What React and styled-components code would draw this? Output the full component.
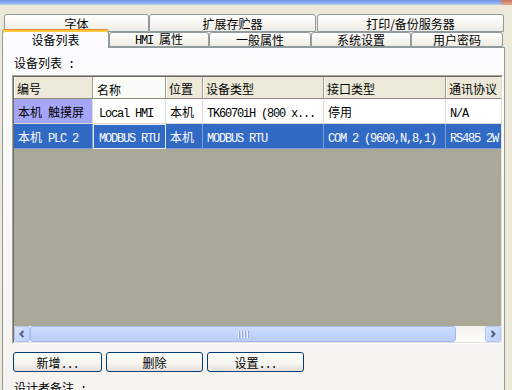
import styled, { createGlobalStyle } from "styled-components";

const GlobalStyle = createGlobalStyle`
  html, body {
    margin: 0;
    padding: 0;
    background: #ECE9D8;
  }
  body {
    font-family: "Noto Sans CJK SC", "Noto Sans", sans-serif;
    font-size: 12px;
    color: #000;
  }
`;

const Window = styled.div`
  width: 512px;
  height: 390px;
  overflow: hidden;
  display: flex;
  flex-direction: column;
  background: #ECE9D8;
`;

const TitleEdge = styled.div`
  flex: none;
  height: 5px;
  display: flex;
  background: linear-gradient(#6E93E6, #9DB8EE 80%, #C8D6F2);
`;

const TitleFill = styled.div`
  flex: 1;
`;

const CloseCorner = styled.div`
  width: 11px;
  border-radius: 0 0 0 3px;
  background: linear-gradient(#C9705A, #E4A894);
`;

const TabStrip = styled.div`
  flex: none;
  padding-top: 9px;
  display: flex;
  flex-direction: column;
`;

const BackRow = styled.div`
  display: flex;
  height: 18px;
  padding-left: 4px;
`;

const FrontRow = styled.div`
  display: flex;
  align-items: flex-end;
  height: 15px;
  padding-left: 2px;
`;

const Tab = styled.div`
  box-sizing: border-box;
  flex: none;
  width: ${(p) => p.$w}px;
  margin-left: ${(p) => p.$ml || 0}px;
  height: ${(p) => (p.$selected ? 19 : p.$back ? 18 : 15)}px;
  margin-bottom: ${(p) => (p.$selected ? -1 : 0)}px;
  position: relative;
  z-index: ${(p) => (p.$selected ? 2 : 1)};
  border: 1px solid #919B9C;
  border-bottom: ${(p) => (p.$selected ? "none" : "1px solid #919B9C")};
  border-top-color: ${(p) => (p.$selected ? "#E68B2C" : "#919B9C")};
  border-radius: 3px 3px 0 0;
  background: ${(p) =>
    p.$selected ? "#FCFCFE" : "linear-gradient(#FFFFFF, #F3F2EC 70%, #ECEBE6)"};
  box-shadow: ${(p) => (p.$selected ? "inset 0 2px 0 #FFC83C" : "none")};
  display: flex;
  align-items: center;
  justify-content: center;
  padding-top: ${(p) => (p.$selected ? 2 : 1)}px;
  line-height: 14px;
  white-space: nowrap;
`;

const Panel = styled.div`
  flex: 1;
  min-height: 0;
  overflow: hidden;
  box-sizing: border-box;
  margin: 0 7px 0 2px;
  border: 1px solid #919B9C;
  border-bottom: none;
  background: linear-gradient(#FCFCFE, #F4F3EE);
  padding: 7px 0 0 11px;
  display: flex;
  flex-direction: column;
`;

const Label = styled.div`
  flex: none;
  line-height: 14px;
  height: 14px;
  padding-top: 1px;
  white-space: nowrap;
`;

const Grid = styled.div`
  box-sizing: border-box;
  flex: none;
  width: 491px;
  height: 269px;
  margin: 5px 0 0 -2px;
  border: 1px solid;
  border-color: #A5A397 #FFFFFF #FFFFFF #A5A397;
  display: flex;
`;

const GridInner = styled.div`
  flex: 1;
  min-width: 0;
  border: 1px solid;
  border-color: #6B6B6B #E3E1D6 #E3E1D6 #6B6B6B;
  display: flex;
  flex-direction: column;
  overflow: hidden;
`;

const Row = styled.div`
  display: flex;
  flex: none;
  height: ${(p) => (p.$header ? 22 : 25)}px;
`;

const HeadCell = styled.div`
  box-sizing: border-box;
  flex: none;
  width: ${(p) => p.$w}px;
  height: 22px;
  padding: ${(p) => (p.$active ? "4px 0 0 4px" : "2px 0 0 3px")};
  background: ${(p) => (p.$active ? "#FAFAF7" : "#ECE9D8")};
  border-right: 1px solid #A19F92;
  border-bottom: 1px solid #8E8C80;
  box-shadow: inset 1px 0 0 #FFFFFF;
  display: flex;
  align-items: center;
  white-space: nowrap;
  overflow: hidden;
`;

const Cell = styled.div`
  box-sizing: border-box;
  flex: none;
  width: ${(p) => p.$w}px;
  height: 25px;
  padding: 1px 0 0 ${(p) => (p.$pad != null ? p.$pad : 4)}px;
  background: ${(p) => p.$bg};
  color: ${(p) => p.$fg};
  border-right: 1px solid ${(p) => p.$line};
  border-bottom: 1px solid ${(p) => p.$line};
  outline: ${(p) => (p.$focus ? "1px solid #E8ECF6" : "none")};
  outline-offset: -1px;
  display: flex;
  align-items: center;
  white-space: nowrap;
  overflow: hidden;
`;

const Text = styled.span`
  white-space: pre;
`;

const Mono = styled.span`
  font-family: "Liberation Mono", monospace;
  font-size: 12px;
  letter-spacing: -1.2px;
  white-space: pre;
`;

const Workspace = styled.div`
  flex: 1;
  background: #ABA899;
`;

const ScrollBar = styled.div`
  flex: none;
  height: 16px;
  display: flex;
  background: linear-gradient(#F3F1EC, #FEFEFB);
`;

const ArrowButton = styled.div`
  box-sizing: border-box;
  flex: none;
  width: 16px;
  height: 16px;
  border: 1px solid #B3C6F4;
  border-radius: 2px;
  background: linear-gradient(135deg, #D8E3FE, #BCCFFB);
  display: flex;
  align-items: center;
  justify-content: center;
`;

const Thumb = styled.div`
  box-sizing: border-box;
  flex: none;
  width: 426px;
  height: 16px;
  border: 1px solid #A4BAEE;
  border-radius: 3px;
  background: linear-gradient(#CEDCFD, #C1D3FB 60%, #B8CCF8);
  display: flex;
  align-items: center;
  justify-content: center;
  gap: 1px;
`;

const Grip = styled.span`
  width: 1px;
  height: 7px;
  background: #EEF3FF;
  box-shadow: 1px 0 0 #8CA8E6;
  margin-right: 1px;
`;

const Track = styled.div`
  flex: 1;
`;

const ButtonRow = styled.div`
  flex: none;
  display: flex;
  gap: 4px;
  margin: 8px 0 0 -1px;
`;

const Button = styled.div`
  box-sizing: border-box;
  width: ${(p) => p.$w}px;
  height: 20px;
  padding-top: 1px;
  border: 1px solid #003C74;
  border-radius: 3px;
  background: linear-gradient(#FFFFFF, #F5F4EF 60%, #E3E1D8);
  display: flex;
  align-items: center;
  justify-content: center;
  white-space: nowrap;
`;

const NoteLabel = styled(Label)`
  margin-top: 8px;
`;

const txt = (s) => (
  <Text>
    {s.split(/([\x20-\x7e]+)/).map((part, i) =>
      /^[\x20-\x7e]+$/.test(part) ? <Mono key={i}>{part}</Mono> : part
    )}
  </Text>
);

const columns = [
  { w: 79, title: "编号" },
  { w: 73, title: "名称", active: true },
  { w: 37, title: "位置" },
  { w: 121, title: "设备类型" },
  { w: 122, title: "接口类型" },
  { w: 90, title: "通讯协议" },
];

const rows = [
  {
    cells: ["本机 触摸屏", "Local HMI", "本机", "TK6070iH (800 x...", "停用", "N/A"],
    selected: false,
  },
  {
    cells: ["本机 PLC 2", "MODBUS RTU", "本机", "MODBUS RTU", "COM 2 (9600,N,8,1)", "RS485 2W"],
    selected: true,
  },
];

const Chevron = ({ dir }) => (
  <svg width="6" height="8" viewBox="0 0 6 8">
    <polyline
      points={dir === "left" ? "4.5,1 1.5,4 4.5,7" : "1.5,1 4.5,4 1.5,7"}
      fill="none"
      stroke="#4D6185"
      strokeWidth="2"
    />
  </svg>
);

const App = () => {
  return (
    <Window>
      <GlobalStyle />
      <TitleEdge>
        <TitleFill />
        <CloseCorner />
      </TitleEdge>
      <TabStrip>
        <BackRow>
          <Tab $back $w={145}>字体</Tab>
          <Tab $back $w={167}>扩展存贮器</Tab>
          <Tab $back $w={187} $ml={1}>打印/备份服务器</Tab>
        </BackRow>
        <FrontRow>
          <Tab $selected $w={107}>设备列表</Tab>
          <Tab $w={100}>{txt("HMI 属性")}</Tab>
          <Tab $w={102}>一般属性</Tab>
          <Tab $w={100}>系统设置</Tab>
          <Tab $w={92}>用户密码</Tab>
        </FrontRow>
      </TabStrip>
      <Panel>
        <Label>{txt("设备列表 :")}</Label>
        <Grid>
          <GridInner>
            <Row $header>
              {columns.map((c) => (
                <HeadCell key={c.title} $w={c.w} $active={c.active}>
                  {c.title}
                </HeadCell>
              ))}
            </Row>
            {rows.map((r, ri) => (
              <Row key={ri}>
                {r.cells.map((v, ci) => {
                  const lavender = !r.selected && ci === 0;
                  return (
                    <Cell
                      key={ci}
                      $w={columns[ci].w}
                      $pad={ci === 1 ? 6 : 4}
                      $bg={r.selected ? "#316AC5" : lavender ? "#A6A6F9" : "#FFFFFF"}
                      $fg={r.selected ? "#FFFFFF" : "#000000"}
                      $line={r.selected ? "#7C9ED8" : "#DCDBD3"}
                      $focus={r.selected && ci === 1}
                    >
                      {txt(v)}
                    </Cell>
                  );
                })}
              </Row>
            ))}
            <Workspace />
            <ScrollBar>
              <ArrowButton>
                <Chevron dir="left" />
              </ArrowButton>
              <Thumb>
                <Grip />
                <Grip />
                <Grip />
                <Grip />
              </Thumb>
              <Track />
              <ArrowButton>
                <Chevron dir="right" />
              </ArrowButton>
            </ScrollBar>
          </GridInner>
        </Grid>
        <ButtonRow>
          <Button $w={89}>{txt("新增...")}</Button>
          <Button $w={97}>删除</Button>
          <Button $w={97}>{txt("设置...")}</Button>
        </ButtonRow>
        <NoteLabel>{txt("设计者备注 :")}</NoteLabel>
      </Panel>
    </Window>
  );
};

export default App;
